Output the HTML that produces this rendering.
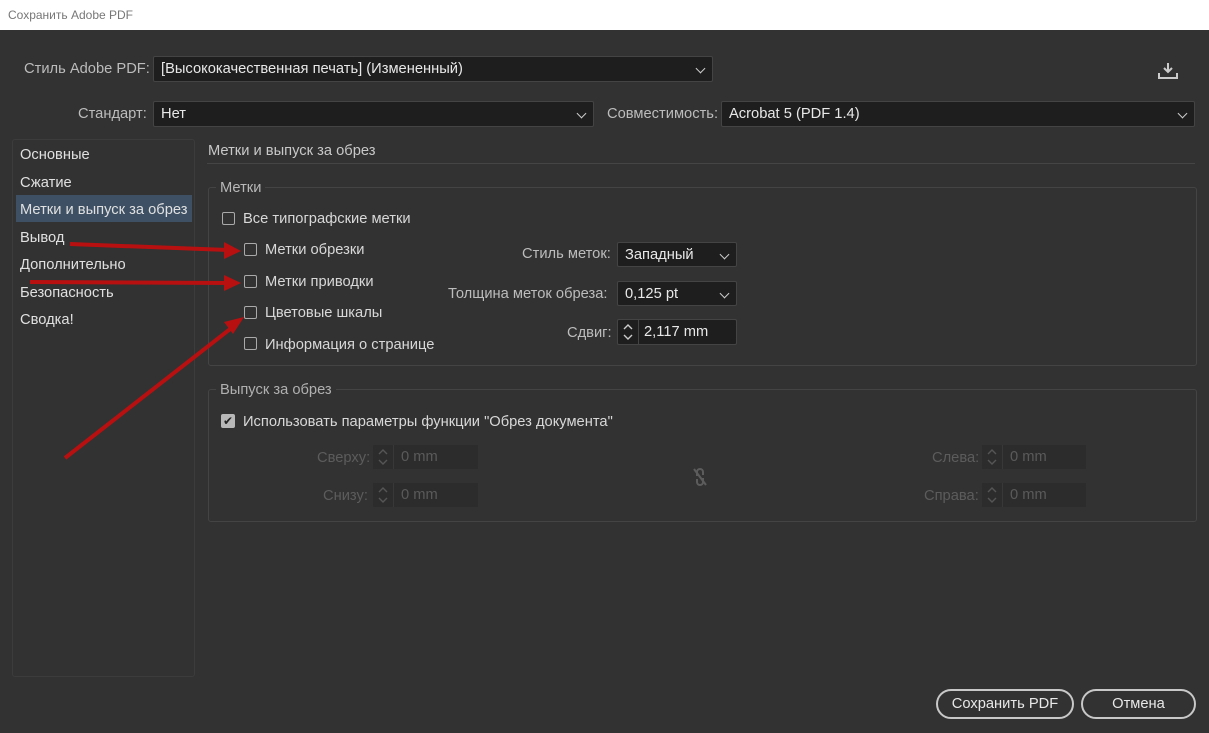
<!DOCTYPE html><html><head><style>
body{margin:0;width:1209px;height:733px;background:#323232;font-family:"Liberation Sans",sans-serif;font-size:14.7px;color:#d8d8d8;position:relative;overflow:hidden}
.a{position:absolute;white-space:nowrap}
.title{left:0;top:0;width:1209px;height:30px;background:#fff;color:#777;font-size:12px}
.in{position:absolute;background:#1e1e1e;border:1px solid #444;border-radius:2px;box-sizing:border-box;color:#e8e8e8;padding-left:7px;line-height:24px}
.chev{position:absolute;right:8px;top:8px;width:6px;height:6px;border-right:1.5px solid #ccc;border-bottom:1.5px solid #ccc;transform:rotate(45deg)}
.lbl{color:#bcbcbc;text-align:right}
.cb{position:absolute;width:13px;height:13px;border:1px solid #aaa;border-radius:2px;box-sizing:border-box}
.grp{position:absolute;border:1px solid #444;border-radius:3px}
.dis{color:#5c5c5c}
.din{position:absolute;background:#2c2c2c;height:24px;color:#5a5a5a;line-height:24px;padding-left:28px;box-sizing:border-box}
.din svg{position:absolute;left:4px;top:3px}
.din i{position:absolute;left:20px;top:0;width:1px;height:24px;background:#383838}
.btn{position:absolute;border:2px solid #c8c8c8;border-radius:16px;height:30px;box-sizing:border-box;text-align:center;line-height:27px;color:#e8e8e8}
</style></head><body>
<div class="a title"><span style="position:absolute;left:8px;top:8px">Сохранить Adobe PDF</span></div>
<div class="a lbl" style="left:24px;top:61px">Стиль Adobe PDF:</div>
<div class="in" style="left:153px;top:56px;width:560px;height:26px">[Высококачественная печать] (Измененный)<div class="chev"></div></div>
<svg class="a" style="left:1157px;top:61px" width="22" height="20"><path d="M11 2v9M7 7l4 4 4-4" stroke="#ccc" stroke-width="2" fill="none"/><path d="M2 12v5h18v-5" stroke="#ccc" stroke-width="2" fill="none"/></svg>
<div class="a lbl" style="left:78px;top:106px">Стандарт:</div>
<div class="in" style="left:153px;top:101px;width:441px;height:26px">Нет<div class="chev"></div></div>
<div class="a lbl" style="left:607px;top:106px">Совместимость:</div>
<div class="in" style="left:721px;top:101px;width:474px;height:26px">Acrobat 5 (PDF 1.4)<div class="chev"></div></div>
<div class="grp" style="left:12px;top:139px;width:181px;height:536px;border-color:#3c3c3c"></div>
<div class="a" style="left:16px;top:195px;width:176px;height:27px;background:#3d5064"></div>
<div class="a" style="left:20px;top:147px;color:#e0e0e0">Основные</div>
<div class="a" style="left:20px;top:175px;color:#e0e0e0">Сжатие</div>
<div class="a" style="left:20px;top:202px;color:#e0e0e0">Метки и выпуск за обрез</div>
<div class="a" style="left:20px;top:230px;color:#e0e0e0">Вывод</div>
<div class="a" style="left:20px;top:257px;color:#e0e0e0">Дополнительно</div>
<div class="a" style="left:20px;top:285px;color:#e0e0e0">Безопасность</div>
<div class="a" style="left:20px;top:312px;color:#e0e0e0">Сводка!</div>
<div class="a" style="left:208px;top:143px;color:#c8c8c8">Метки и выпуск за обрез</div>
<div class="a" style="left:207px;top:163px;width:988px;height:1px;background:#454545"></div>
<div class="grp" style="left:208px;top:187px;width:987px;height:177px"></div>
<div class="a" style="left:216px;top:180px;background:#323232;padding:0 4px;color:#b8b8b8">Метки</div>
<div class="cb" style="left:222px;top:212px"></div><div class="a" style="left:243px;top:211px">Все типографские метки</div>
<div class="cb" style="left:244px;top:243px"></div><div class="a" style="left:265px;top:242px">Метки обрезки</div>
<div class="cb" style="left:244px;top:275px"></div><div class="a" style="left:265px;top:274px">Метки приводки</div>
<div class="cb" style="left:244px;top:306px"></div><div class="a" style="left:265px;top:305px">Цветовые шкалы</div>
<div class="cb" style="left:244px;top:337px"></div><div class="a" style="left:265px;top:337px">Информация о странице</div>
<div class="a lbl" style="left:522px;top:246px">Стиль меток:</div>
<div class="in" style="left:617px;top:242px;width:120px;height:25px">Западный<div class="chev"></div></div>
<div class="a lbl" style="left:448px;top:286px">Толщина меток обреза:</div>
<div class="in" style="left:617px;top:281px;width:120px;height:25px">0,125 pt<div class="chev"></div></div>
<div class="a lbl" style="left:567px;top:325px">Сдвиг:</div>
<div class="in" style="left:617px;top:319px;width:120px;height:26px;padding-left:26px"><svg style="position:absolute;left:4px;top:3px" width="12" height="18"><path d="M2 6l4-4 4 4M2 12l4 4 4-4" stroke="#ccc" stroke-width="1.4" fill="none"/></svg><span style="position:absolute;left:20px;top:0;width:1px;height:24px;background:#444"></span>2,117 mm</div>
<div class="grp" style="left:208px;top:389px;width:987px;height:131px"></div>
<div class="a" style="left:216px;top:382px;background:#323232;padding:0 4px;color:#b0b0b0">Выпуск за обрез</div>
<div class="a" style="left:221px;top:414px;width:14px;height:14px;background:#b8b8b8;border-radius:2px;color:#222;font-size:12px;line-height:14px;text-align:center">✔</div>
<div class="a" style="left:243px;top:414px">Использовать параметры функции "Обрез документа"</div>
<div class="a dis" style="left:317px;top:450px">Сверху:</div><div class="din" style="left:373px;top:445px;width:105px"><svg width="12" height="18"><path d="M2 6l4-4 4 4M2 12l4 4 4-4" stroke="#555" stroke-width="1.4" fill="none"/></svg><i></i>0 mm</div>
<div class="a dis" style="left:323px;top:488px">Снизу:</div><div class="din" style="left:373px;top:483px;width:105px"><svg width="12" height="18"><path d="M2 6l4-4 4 4M2 12l4 4 4-4" stroke="#555" stroke-width="1.4" fill="none"/></svg><i></i>0 mm</div>
<div class="a dis" style="left:932px;top:450px">Слева:</div><div class="din" style="left:982px;top:445px;width:104px"><svg width="12" height="18"><path d="M2 6l4-4 4 4M2 12l4 4 4-4" stroke="#555" stroke-width="1.4" fill="none"/></svg><i></i>0 mm</div>
<div class="a dis" style="left:924px;top:488px">Справа:</div><div class="din" style="left:982px;top:483px;width:104px"><svg width="12" height="18"><path d="M2 6l4-4 4 4M2 12l4 4 4-4" stroke="#555" stroke-width="1.4" fill="none"/></svg><i></i>0 mm</div>
<svg class="a" style="left:690px;top:466px" width="20" height="22"><path d="M4 3l12 16" stroke="#5c5c5c" stroke-width="2"/><path d="M7 10V6a3 3 0 0 1 6 0v3M7 13v3a3 3 0 0 0 6 0v-4" stroke="#5c5c5c" stroke-width="2" fill="none"/></svg>
<div class="btn" style="left:936px;top:689px;width:138px">Сохранить PDF</div>
<div class="btn" style="left:1081px;top:689px;width:115px">Отмена</div>
<svg class="a" style="left:0;top:0" width="400" height="480"><g stroke="#b81010" stroke-width="4" fill="#b81010">
<line x1="70" y1="244" x2="228" y2="250"/><polygon points="241,251 224,242 224,259" stroke="none"/>
<line x1="30" y1="282" x2="228" y2="283"/><polygon points="241,283 224,275 224,291" stroke="none"/>
<line x1="65" y1="458" x2="234" y2="326"/><polygon points="244,317 224,322 233,334" stroke="none"/>
</g></svg>
</body></html>
